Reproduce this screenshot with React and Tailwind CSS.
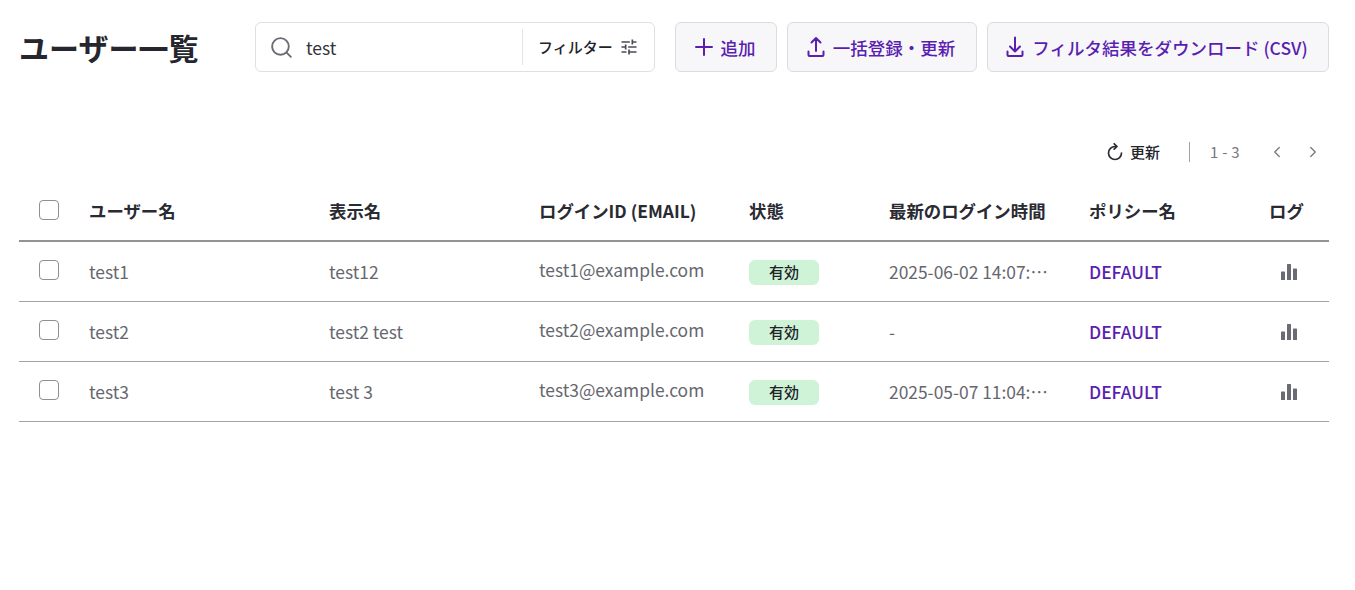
import React from "react";
import { Search, ChevronLeft, ChevronRight } from "lucide-react";

const Tune = () => (
  <svg width="20" height="20" viewBox="0 0 24 24" fill="#4b4b55"><path d="M3 17v2h6v-2H3zM3 5v2h10V5H3zm10 16v-2h8v-2h-8v-2h-2v6h2zM7 9v2H3v2h4v2h2V9H7zm14 4v-2H11v2h10zm-6-4h2V7h4V5h-4V3h-2v6z" /></svg>
);
const Bars = () => (
  <svg width="18" height="18" viewBox="0 0 18 18" fill="#6b6b76"><path d="M1 9a.5.5 0 0 1 .5-.5h3a.5.5 0 0 1 .5.5v8H1.5a.5.5 0 0 1-.5-.5zM7 1.5a.5.5 0 0 1 .5-.5h3a.5.5 0 0 1 .5.5V17H7zM13 6a.5.5 0 0 1 .5-.5h3a.5.5 0 0 1 .5.5v10.5a.5.5 0 0 1-.5.5H13z" /></svg>
);
const stroke = { fill: "none", stroke: "currentColor", strokeWidth: 2, strokeLinecap: "round", strokeLinejoin: "round" };
const PlusIcon = () => (
  <svg width="18" height="18" viewBox="0 0 18 18" {...stroke}><path d="M9 1v16M1 9h16" /></svg>
);
const UploadIcon = () => (
  <svg width="18" height="22" viewBox="0 0 18 22" {...stroke}><path d="M9 15V2M4.5 6.5 9 2l4.5 4.5M1.5 15.5v3.5a1 1 0 0 0 1 1h13a1 1 0 0 0 1-1v-3.5" /></svg>
);
const DownloadIcon = () => (
  <svg width="18" height="22" viewBox="0 0 18 22" {...stroke}><path d="M9 1.5V15.5M4 10.5l5 5 5-5M1.5 15.5v3.5a1 1 0 0 0 1 1h13a1 1 0 0 0 1-1v-3.5" /></svg>
);
const RefreshIcon = () => (
  <svg width="18" height="18" viewBox="0 0 18 18" className="text-[#2c2c34]" {...stroke} strokeWidth={1.7}><path d="M9 3.5A6.5 6.5 0 1 0 15.5 10M8.2 .8 11 3.5 8.2 6.2" /></svg>
);
const Btn = ({ icon, children, w }) => (
  <button className={`flex h-[50px] items-center justify-center gap-2 rounded-md border border-[#dcdce0] bg-[#f7f6f9] pr-[2px] text-[17.5px] font-medium text-[#5a1fb0] ${w}`}>
    {icon}
    <span className="pt-[2px]">{children}</span>
  </button>
);
const cols = "grid grid-cols-[70px_240px_210px_210px_140px_200px_180px_60px] items-center";
const Box = () => <span className="ml-5 block h-5 w-5 rounded border border-[#8e8e95] bg-white" />;
const rows = [
  ["test1", "test12", "test1@example.com", "2025-06-02 14:07:32"],
  ["test2", "test2 test", "test2@example.com", "-"],
  ["test3", "test 3", "test3@example.com", "2025-05-07 11:04:18"],
];

export default function App() {
  return (
    <div className="min-h-[590px] bg-white pl-[19px] pr-[26px] pt-[22px] text-[#22222a] [font-family:'Noto_Sans_CJK_JP','Noto_Sans',sans-serif]">
      <header className="flex items-center">
        <h1 className="w-[236px] text-[30px] leading-[50px] font-bold text-[#26262e]">ユーザー一覧</h1>
        <div className="flex h-[50px] w-[400px] items-center rounded-md border border-[#e0e0e3] bg-white pl-[13px]">
          <Search size={25} strokeWidth={1.8} className="text-[#6b6b76]" />
          <span className="ml-3 flex-1 pt-[2px] text-[17.5px] text-[#33333b]">test</span>
          <div className="flex h-9 w-[132px] items-center gap-[6px] border-l border-[#e4e4e7] pl-[15px] text-[15px] font-medium">
            <span>フィルター</span>
            <Tune />
          </div>
        </div>
        <div className="ml-5 flex gap-[10px]">
          <Btn w="w-[102px]" icon={<PlusIcon />}>追加</Btn>
          <Btn w="w-[190px]" icon={<UploadIcon />}>一括登録・更新</Btn>
          <Btn w="w-[342px]" icon={<DownloadIcon />}>フィルタ結果をダウンロード (CSV)</Btn>
        </div>
      </header>

      <div className="mt-[68px] flex h-6 items-center justify-end">
        <RefreshIcon />
        <span className="ml-[6px] text-[15px] font-medium">更新</span>
        <span className="ml-[29px] h-5 w-px bg-[#a0a0a6]" />
        <span className="ml-5 text-[15px] tracking-[0.3px] text-[#77777f]">1 - 3</span>
        <ChevronLeft size={18} strokeWidth={1.75} className="ml-[28px] text-[#77777f]" />
        <ChevronRight size={18} strokeWidth={1.75} className="ml-[18px] mr-[7px] text-[#77777f]" />
      </div>

      <div className={`${cols} mt-[17px] h-[61px] border-b-2 border-[#929297] pt-[2px] text-[17.4px] font-bold text-[#2a2a32]`}>
        <span className="-mt-1"><Box /></span>
        <span>ユーザー名</span>
        <span>表示名</span>
        <span>ログインID (EMAIL)</span>
        <span>状態</span>
        <span>最新のログイン時間</span>
        <span>ポリシー名</span>
        <span>ログ</span>
      </div>
      {rows.map((r) => (
        <div key={r[0]} className={`${cols} h-[60px] border-b border-[#a2a2a7] pt-[2px] text-[17.4px] text-[#66666e]`}>
          <span className="-mt-[6px]"><Box /></span>
          <span>{r[0]}</span>
          <span>{r[1]}</span>
          <span className="-mt-1">{r[2]}</span>
          <span className="flex h-[25px] w-[70px] items-center justify-center rounded-md bg-[#cff3d6] text-[15px] font-medium text-[#22222a]">有効</span>
          <span className="w-[160px] truncate">{r[3]}</span>
          <span className="font-medium text-[#5a1fb0]">DEFAULT</span>
          <span className="-mt-[2px] pl-[11px]"><Bars /></span>
        </div>
      ))}
    </div>
  );
}
